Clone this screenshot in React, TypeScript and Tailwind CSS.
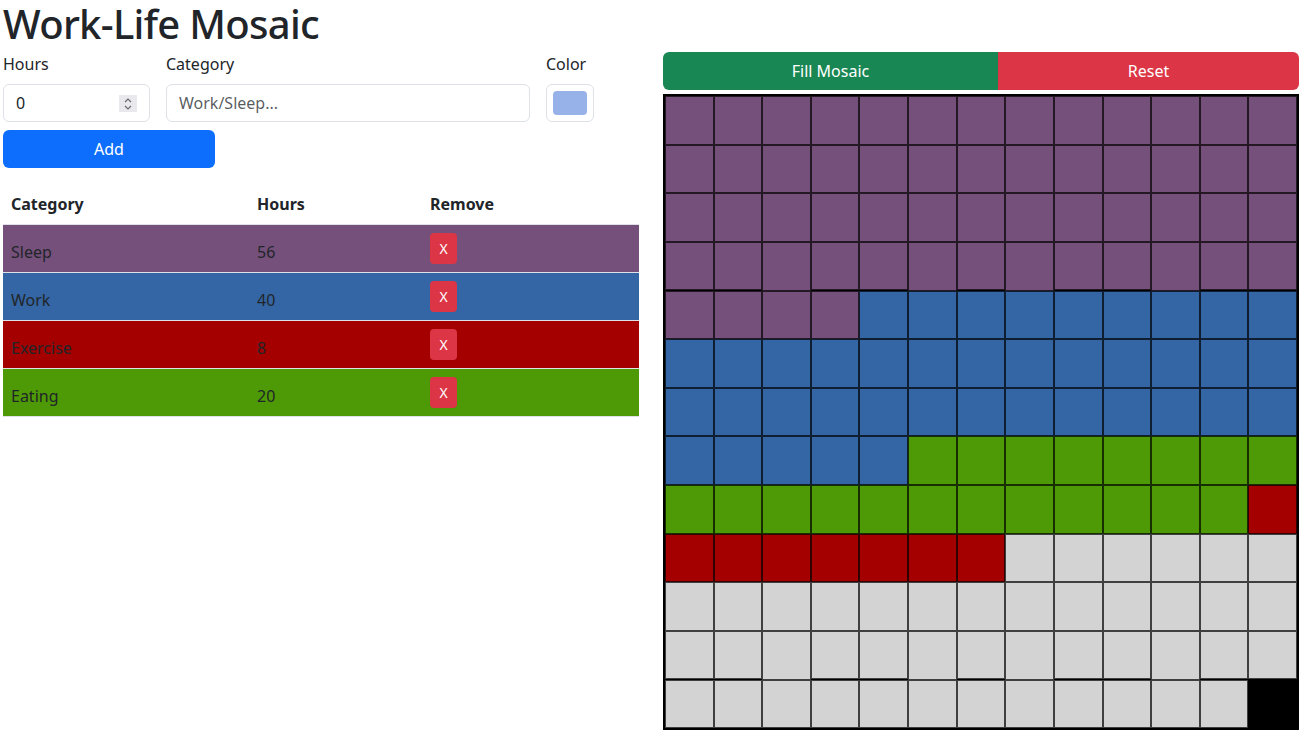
import React from "react";

const entries = [
  { name: "Sleep", hours: 56, color: "#75507b" },
  { name: "Work", hours: 40, color: "#3465a4" },
  { name: "Exercise", hours: 8, color: "#a40000" },
  { name: "Eating", hours: 20, color: "#4e9a06" },
];

const fillOrder = [
  { hours: 56, color: "#75507b" },
  { hours: 40, color: "#3465a4" },
  { hours: 20, color: "#4e9a06" },
  { hours: 8, color: "#a40000" },
];

function buildCells(): string[] {
  const cells: string[] = [];
  for (const f of fillOrder) for (let i = 0; i < f.hours; i++) cells.push(f.color);
  while (cells.length < 168) cells.push("#d3d3d3");
  return cells;
}

export default function App() {
  const cells = buildCells();
  return (
    <div
      className="min-h-screen bg-white text-[#212529] px-[3px]"
      style={{ fontFamily: '"Noto Sans", "Liberation Sans", sans-serif' }}
    >
      <h1 className="text-[40px] leading-[48px] font-medium tracking-[-0.7px] mb-[4px]">Work-Life Mosaic</h1>
      <div className="flex gap-[24px]">
        {/* Left column */}
        <div className="w-[636px] shrink-0">
          <div className="flex gap-[16px]">
            <div className="w-[147px]">
              <label className="block text-[16px] leading-[24px] mb-[8px]">Hours</label>
              <div className="relative h-[38px] border border-[#dee2e6] rounded-[6px] flex items-center pl-[12px]">
                <span className="text-[16px]">0</span>
                <div className="absolute right-[12px] top-[10px] w-[18px] h-[17px] bg-[#e9e9ed] flex items-center justify-center">
                  <svg width="10" height="14" viewBox="0 0 10 14" fill="none" stroke="#6b6b6b" strokeWidth="1.2">
                    <path d="M2 5 L5 2 L8 5" />
                    <path d="M2 9 L5 12 L8 9" />
                  </svg>
                </div>
              </div>
            </div>
            <div className="w-[364px]">
              <label className="block text-[16px] leading-[24px] mb-[8px]">Category</label>
              <div className="h-[38px] border border-[#dee2e6] rounded-[6px] flex items-center pl-[12px]">
                <span className="text-[16px] text-[#212529bf]">Work/Sleep...</span>
              </div>
            </div>
            <div className="w-[48px]">
              <label className="block text-[16px] leading-[24px] mb-[8px]">Color</label>
              <div className="h-[38px] border border-[#dee2e6] rounded-[6px] p-[6px]">
                <div className="w-full h-full rounded-[4px] bg-[#97b2e8]" />
              </div>
            </div>
          </div>
          <button className="mt-[8px] w-[212px] h-[38px] rounded-[6px] bg-[#0d6efd] text-white text-[16px]">
            Add
          </button>
          <table className="mt-[16px] w-full border-collapse text-[16px] leading-[24px]">
            <thead>
              <tr className="border-b border-[#dee2e6]">
                <th className="w-[246px] text-left font-bold p-[8px]">Category</th>
                <th className="w-[173px] text-left font-bold p-[8px]">Hours</th>
                <th className="text-left font-bold p-[8px]">Remove</th>
              </tr>
            </thead>
            <tbody>
              {entries.map((e) => (
                <tr key={e.name} className="border-b border-[#dee2e6]" style={{ backgroundColor: e.color }}>
                  <td className="px-[8px] pt-[15px] pb-[2px] align-top">{e.name}</td>
                  <td className="px-[8px] pt-[15px] pb-[2px] align-top">{e.hours}</td>
                  <td className="p-[8px] align-top">
                    <button className="block w-[27px] h-[31px] rounded-[4px] bg-[#dc3545] text-white text-[14px] leading-[21px]">
                      X
                    </button>
                  </td>
                </tr>
              ))}
            </tbody>
          </table>
        </div>
        {/* Right column */}
        <div className="w-[636px] shrink-0">
          <div className="flex h-[38px]">
            <button className="w-[335px] h-full rounded-l-[6px] bg-[#198754] text-white text-[16px]">
              Fill Mosaic
            </button>
            <button className="flex-1 h-full rounded-r-[6px] bg-[#dc3545] text-white text-[16px]">
              Reset
            </button>
          </div>
          <div className="mt-[4px] w-[636px] border-2 border-black bg-black grid grid-cols-[repeat(13,minmax(0,1fr))]">
            {cells.map((c, i) => (
              <div key={i} className="aspect-square border border-black/70" style={{ backgroundColor: c }} />
            ))}
          </div>
        </div>
      </div>
    </div>
  );
}
